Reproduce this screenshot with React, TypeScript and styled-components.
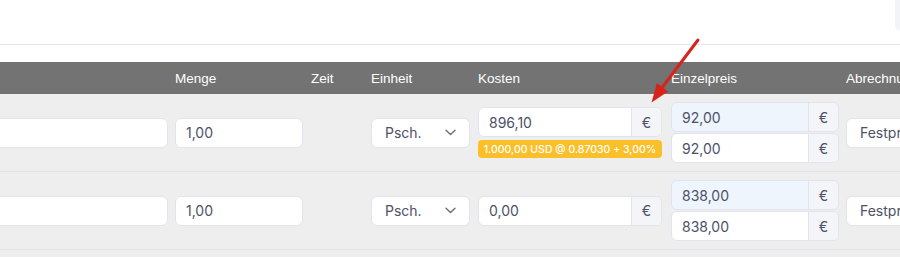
import React from 'react';
import styled, { createGlobalStyle } from 'styled-components';

const GlobalStyle = createGlobalStyle`
  html, body {
    margin: 0;
    padding: 0;
    background: #eeeeee;
    overflow: hidden;
  }
  * {
    box-sizing: border-box;
  }
`;

const COLUMNS = '375px 136px 60px 107px 193px 175px 1fr';

const Page = styled.div`
  position: relative;
  width: 900px;
  height: 257px;
  overflow: hidden;
  background: #eeeeee;
  font-family: Inter, 'Noto Sans', sans-serif;
`;

const Head = styled.div`
  background: #ffffff;
  padding-bottom: 17px;
`;

const Toolbar = styled.div`
  height: 45px;
  display: flex;
  justify-content: flex-end;
  align-items: flex-start;
  border-bottom: 1px solid #e6e7eb;
  overflow: hidden;
`;

const ToolButton = styled.div`
  width: 60px;
  height: 31px;
  margin-right: -55px;
  background: #f2f4f8;
  border-radius: 0 0 0 6px;
`;

const Table = styled.div`
  margin-left: -200px;
  width: 1300px;
`;

const HeaderRow = styled.div`
  display: grid;
  grid-template-columns: ${COLUMNS};
  align-items: center;
  height: 32px;
  background: #737373;
  color: #ffffff;
  font-family: 'Liberation Sans', Arial, sans-serif;
  font-size: 13.5px;
`;

const HeaderCell = styled.div`
  padding-top: 1px;
`;

const Row = styled.div`
  display: grid;
  grid-template-columns: ${COLUMNS};
  align-items: center;
  padding: 8px 0;
  border-bottom: 1px solid #e1e3eb;
`;

const Cell = styled.div`
  display: flex;
  flex-direction: column;
`;

const Field = styled.div<{ $width: number }>`
  width: ${({ $width }) => $width}px;
  height: 30px;
  display: flex;
  align-items: center;
  padding: 0 10px;
  background: #ffffff;
  border: 1px solid #e2e3ec;
  border-radius: 6px;
  color: #4d5169;
  font-size: 14px;
`;

const Select = styled(Field)`
  justify-content: space-between;
  padding: 0 13px 0 13px;
`;

const Group = styled.div<{ $width: number; $tint?: boolean }>`
  width: ${({ $width }) => $width}px;
  height: 30px;
  display: flex;
  background: ${({ $tint }) => ($tint ? '#eef5fd' : '#ffffff')};
  border: 1px solid #e2e3ec;
  border-radius: 6px;
  overflow: hidden;
  color: #4d5169;
  font-size: 14px;
`;

const GroupValue = styled.div`
  flex: 1;
  display: flex;
  align-items: center;
  padding: 0 10px;
`;

const Addon = styled.div`
  width: 30px;
  display: flex;
  align-items: center;
  justify-content: center;
  background: #f3f5f9;
  border-left: 1px solid #e2e3ec;
`;

const Stack = styled.div`
  display: flex;
  flex-direction: column;
  gap: 1px;
`;

const CostStack = styled.div`
  display: flex;
  flex-direction: column;
  gap: 3px;
`;

const Badge = styled.div`
  width: 184px;
  height: 18px;
  display: flex;
  align-items: center;
  justify-content: center;
  background: #fbbf2a;
  border-radius: 4px;
  color: #ffffff;
  font-size: 10.5px;
  font-weight: 500;
`;

const Overlay = styled.svg`
  position: absolute;
  left: 0;
  top: 0;
  pointer-events: none;
`;

const Chevron = () => (
  <svg width="11" height="7" viewBox="0 0 11 7" fill="none">
    <path d="M1 1.2L5.5 5.5L10 1.2" stroke="#6b6f82" strokeWidth="1.4" strokeLinecap="round" strokeLinejoin="round" />
  </svg>
);

interface Line {
  menge: string;
  kosten: string;
  badge?: string;
  preis: string;
}

const lines: Line[] = [
  { menge: '1,00', kosten: '896,10', badge: '1.000,00 USD @ 0.87030 + 3,00%', preis: '92,00' },
  { menge: '1,00', kosten: '0,00', preis: '838,00' },
];

const App: React.FC = () => (
  <Page>
    <GlobalStyle />
    <Head>
      <Toolbar>
        <ToolButton />
      </Toolbar>
    </Head>
    <Table>
      <HeaderRow>
        <HeaderCell />
        <HeaderCell>Menge</HeaderCell>
        <HeaderCell>Zeit</HeaderCell>
        <HeaderCell>Einheit</HeaderCell>
        <HeaderCell>Kosten</HeaderCell>
        <HeaderCell>Einzelpreis</HeaderCell>
        <HeaderCell>Abrechnung</HeaderCell>
      </HeaderRow>
      {lines.map((line, i) => (
        <Row key={i}>
          <Cell>
            <Field $width={368} />
          </Cell>
          <Cell>
            <Field $width={128}>{line.menge}</Field>
          </Cell>
          <Cell />
          <Cell>
            <Select $width={99}>
              Psch.
              <Chevron />
            </Select>
          </Cell>
          <Cell>
            <CostStack>
              <Group $width={184}>
                <GroupValue>{line.kosten}</GroupValue>
                <Addon>€</Addon>
              </Group>
              {line.badge && <Badge>{line.badge}</Badge>}
            </CostStack>
          </Cell>
          <Cell>
            <Stack>
              <Group $width={168} $tint>
                <GroupValue>{line.preis}</GroupValue>
                <Addon>€</Addon>
              </Group>
              <Group $width={168}>
                <GroupValue>{line.preis}</GroupValue>
                <Addon>€</Addon>
              </Group>
            </Stack>
          </Cell>
          <Cell>
            <Select $width={140}>Festpreis</Select>
          </Cell>
        </Row>
      ))}
    </Table>
    <Overlay width="900" height="257" viewBox="0 0 900 257">
      <line x1="698" y1="40" x2="661" y2="89" stroke="#d8231b" strokeWidth="3" strokeLinecap="round" />
      <polygon points="651.5,102.5 668,91.5 657,83" fill="#d8231b" />
    </Overlay>
  </Page>
);

export default App;
